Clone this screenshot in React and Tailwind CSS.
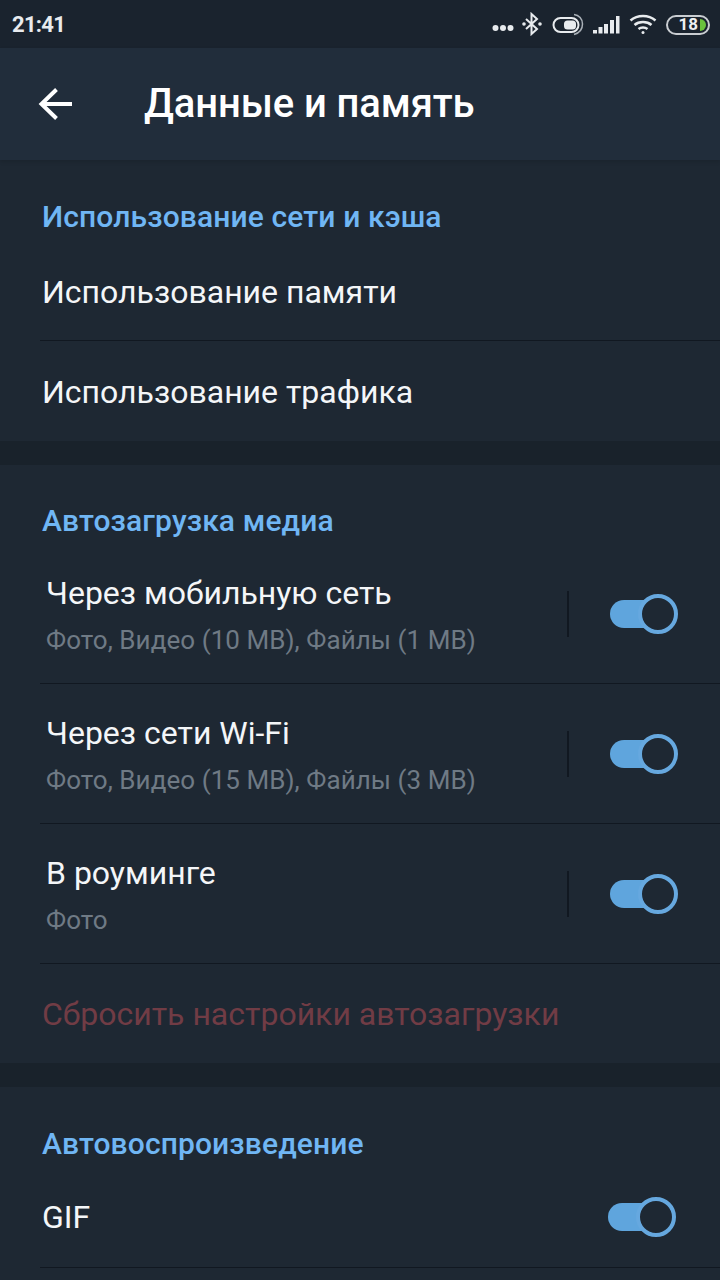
const AUTOLOAD = [
  { title: "Через мобильную сеть", sub: "Фото, Видео (10 MB), Файлы (1 MB)" },
  { title: "Через сети Wi-Fi", sub: "Фото, Видео (15 MB), Файлы (3 MB)" },
  { title: "В роуминге", sub: "Фото" },
];

function StatusIcons() {
  return (
    <div className="flex items-center">
      <svg width="22" height="8" viewBox="0 0 22 8" className="mt-[8px] mr-[8px]" fill="#e8ebee">
        <circle cx="3.500" cy="4" r="3" />
        <circle cx="11" cy="4" r="3" />
        <circle cx="18.500" cy="4" r="3" />
      </svg>
      <svg width="20" height="24" viewBox="0 0 20 24" className="mr-[10px]" fill="none" stroke="#e8ebee" strokeWidth="2">
        <path d="M4 7l11 10-5.500 5V2l5.500 5-11 10" />
        <circle cx="2" cy="12" r="0.800" fill="#e8ebee" />
        <circle cx="18" cy="12" r="0.800" fill="#e8ebee" />
      </svg>
      <svg width="32" height="24" viewBox="0 0 32 24" className="mr-[8px]" fill="none">
        <rect x="1.500" y="6" width="25" height="14" rx="7" stroke="#e8ebee" strokeWidth="2" />
        <rect x="12" y="8.500" width="12" height="9" rx="3.500" fill="#e8ebee" />
        <path d="M22 2.500c5 .5 8.500 4.500 8.500 9.500s-3 9-8.500 10.500" stroke="#a9b0b7" strokeWidth="1.500" />
      </svg>
      <svg width="28" height="20" viewBox="0 0 28 20" className="mt-[2px] mr-[9px]" fill="#e8ebee">
        <rect x="1" y="15" width="4" height="3.500" />
        <rect x="6.500" y="12" width="4" height="6.500" />
        <rect x="12" y="9" width="4" height="9.500" />
        <rect x="18" y="5" width="4" height="13.500" />
        <rect x="24" y="1" width="3.500" height="17.500" />
      </svg>
      <svg width="28" height="22" viewBox="0 0 28 22" className="mr-[9px]" fill="none" stroke="#e8ebee" strokeWidth="2.500">
        <path d="M1.500 7.500c7-6 18-6 25 0" />
        <path d="M5.500 12c4.500-4 12.500-4 17 0" />
        <path d="M9.500 16c2.500-2 6.500-2 9 0" />
        <circle cx="14" cy="19.500" r="1.500" fill="#e8ebee" stroke="none" />
      </svg>
      <div className="mt-[1px] flex h-[20px] w-[44px] items-center justify-end rounded-full border-2 border-[#c9cdd1] pr-[2px]">
        <span className="mr-[2px] text-[17px] leading-none font-bold text-[#eef0f2]">18</span>
        <span className="h-[12px] w-[6px] rounded-r-full bg-[#6ac23c]" />
      </div>
    </div>
  );
}

function Toggle() {
  return (
    <div className="relative h-[28px] w-[68px]">
      <div className="absolute top-0 left-0 h-[28px] w-[50px] rounded-full bg-[#5fa5dd]" />
      <div className="absolute top-[-6px] right-0 h-[40px] w-[40px] rounded-full border-[4px] border-[#66a8df] bg-[#1e2833]" />
    </div>
  );
}

function SectionTitle({ children }) {
  return (
    <h2 className="pl-[42px] text-[30px] leading-[40px] font-medium tracking-[0.12px] text-[#70b6f4]">{children}</h2>
  );
}

export default function App() {
  return (
    <div className="h-[1280px] w-[720px] overflow-hidden bg-[#19222b] font-['Roboto',sans-serif]">
      {/* Status bar */}
      <div className="flex h-[48px] items-center justify-between bg-[#1a232e] pr-[10px] pl-[12px]">
        <span className="text-[22px] font-bold tracking-[-0.7px] text-[#e8ebee]">21:41</span>
        <StatusIcons />
      </div>

      {/* Header */}
      <header className="relative z-10 flex h-[112px] items-center bg-[#212d3b] pl-[36px] shadow-[0_2px_4px_rgba(0,0,0,0.12)]">
        <svg width="40" height="36" viewBox="0 0 40 36" className="mr-[68px]" fill="none" stroke="#ffffff" strokeWidth="4">
          <path d="M5 18h31" />
          <path d="M20.500 3.500L5.500 18l15 14.500" />
        </svg>
        <h1 className="text-[40px] tracking-[-0.1px] font-medium text-white">Данные и память</h1>
      </header>

      <section className="bg-[#1e2833]">
        <div className="flex h-[80px] items-end pb-[3px]">
          <SectionTitle>Использование сети и кэша</SectionTitle>
        </div>
        <div className="ml-[40px] flex h-[101px] items-center border-b border-[#111821] pt-[3px] pl-[2px] text-[32px] text-[#f4f6f8]">
          Использование памяти
        </div>
        <div className="flex h-[100px] items-center pt-[2px] pl-[42px] text-[32px] text-[#f4f6f8]">Использование трафика</div>
      </section>

      <div className="h-[24px]" />

      <section className="bg-[#1e2833]">
        <div className="flex h-[79px] items-end pb-[3px]">
          <SectionTitle>Автозагрузка медиа</SectionTitle>
        </div>
        {AUTOLOAD.map((item) => (
          <div key={item.title} className="ml-[40px] flex h-[140px] items-center border-b border-[#111821] pr-[42px]">
            <div className="flex-1 pt-[2px] pl-[6px]">
              <p className="text-[32px] leading-[44px] text-[#f4f6f8]">{item.title}</p>
              <p className="mt-[7px] text-[26px] leading-[36px] tracking-[0.06px] text-[#6f7a85]">{item.sub}</p>
            </div>
            <div className="mr-[41px] h-[46px] w-[2px] bg-[#111821]" />
            <Toggle />
          </div>
        ))}
        <div className="flex h-[99px] items-center pt-px pl-[42px] text-[32px] text-[#713c45]">Сбросить настройки автозагрузки</div>
      </section>

      <div className="h-[24px]" />

      <section className="bg-[#1e2833]">
        <div className="flex h-[80px] items-end pb-[3px]">
          <SectionTitle>Автовоспроизведение</SectionTitle>
        </div>
        <div className="ml-[40px] flex h-[101px] items-center justify-between border-b border-[#111821] pr-[44px] pl-[2px] text-[32px] text-[#f4f6f8]">
          GIF
          <Toggle />
        </div>
        <div className="h-[20px]" />
      </section>
    </div>
  );
}
